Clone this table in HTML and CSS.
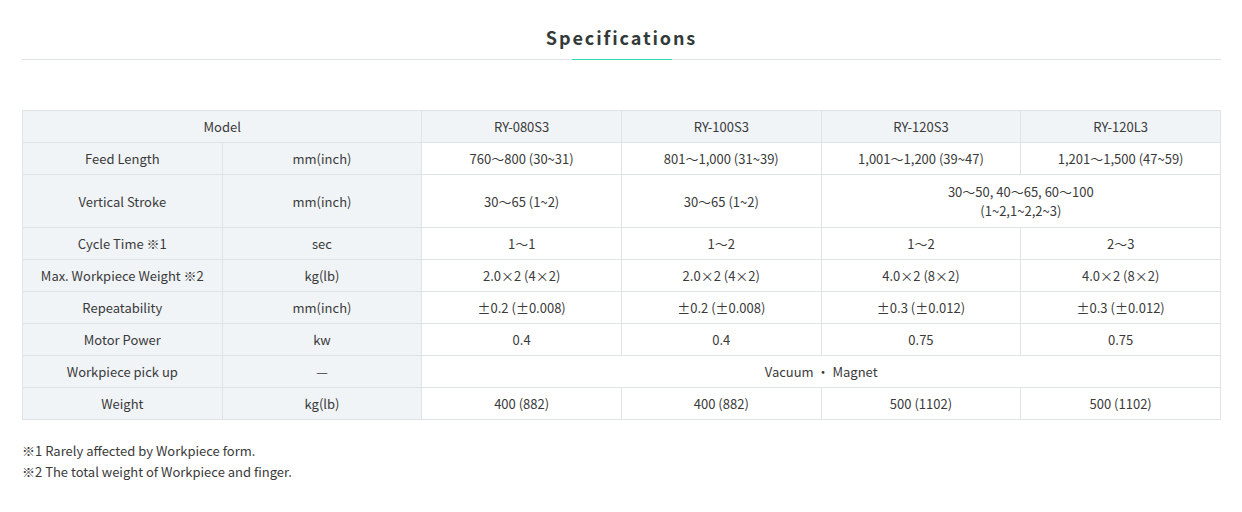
FILE: index.html
```html
<!DOCTYPE html>
<html lang="en">
<head>
<meta charset="utf-8">
<title>Specifications</title>
<link rel="stylesheet" href="styles.css">
</head>
<body>
<div class="page">
  <div class="heading">
    <h2 class="title">Specifications</h2>
  </div>
  <table class="spec">
    <colgroup>
      <col><col><col><col><col><col>
    </colgroup>
    <tr class="r32">
      <th colspan="2">Model</th>
      <th>RY-080S3</th><th>RY-100S3</th><th>RY-120S3</th><th>RY-120L3</th>
    </tr>
    <tr class="r32">
      <th>Feed Length</th><th>mm(inch)</th>
      <td>760～800 (30~31)</td><td>801～1,000 (31~39)</td><td>1,001～1,200 (39~47)</td><td>1,201～1,500 (47~59)</td>
    </tr>
    <tr class="r53">
      <th>Vertical Stroke</th><th>mm(inch)</th>
      <td>30～65 (1~2)</td><td>30～65 (1~2)</td><td colspan="2">30～50, 40～65, 60～100<br>(1~2,1~2,2~3)</td>
    </tr>
    <tr class="r32">
      <th>Cycle Time ※1</th><th>sec</th>
      <td>1～1</td><td>1～2</td><td>1～2</td><td>2～3</td>
    </tr>
    <tr class="r32">
      <th>Max. Workpiece Weight ※2</th><th>kg(lb)</th>
      <td>2.0×2 (4×2)</td><td>2.0×2 (4×2)</td><td>4.0×2 (8×2)</td><td>4.0×2 (8×2)</td>
    </tr>
    <tr class="r32">
      <th>Repeatability</th><th>mm(inch)</th>
      <td>±0.2 (±0.008)</td><td>±0.2 (±0.008)</td><td>±0.3 (±0.012)</td><td>±0.3 (±0.012)</td>
    </tr>
    <tr class="r32">
      <th>Motor Power</th><th>kw</th>
      <td>0.4</td><td>0.4</td><td>0.75</td><td>0.75</td>
    </tr>
    <tr class="r32">
      <th>Workpiece pick up</th><th>—</th>
      <td colspan="4">Vacuum ・ Magnet</td>
    </tr>
    <tr class="r32">
      <th>Weight</th><th>kg(lb)</th>
      <td>400 (882)</td><td>400 (882)</td><td>500 (1102)</td><td>500 (1102)</td>
    </tr>
  </table>
  <div class="notes">
    <p>※1 Rarely affected by Workpiece form.</p>
    <p>※2 The total weight of Workpiece and finger.</p>
  </div>
</div>
</body>
</html>
```

FILE: styles.css
```css
* { box-sizing: border-box; }
html, body { margin: 0; padding: 0; background: #fff; }
body {
  font-family: "Noto Sans CJK JP", "Noto Sans", sans-serif;
  color: #333;
}
.page {
  padding: 0 21px 0 22px;
}
.heading {
  position: relative;
  height: 60px;
  border-bottom: 1px solid #dde3e6;
  text-align: center;
  padding-top: 23px;
}
.heading::after {
  content: "";
  position: absolute;
  left: 50%;
  margin-left: -50px;
  bottom: -1px;
  width: 100px;
  height: 1px;
  background: #2fdcb8;
}
.title {
  margin: 0;
  font-size: 18px;
  line-height: 28px;
  font-weight: 700;
  letter-spacing: 1.9px;
  color: #333a3a;
}
.spec {
  margin-top: 50px;
  width: 1199px;
  border-collapse: collapse;
  table-layout: fixed;
  font-size: 13px;
  color: #3a3a3a;
}
.spec th, .spec td {
  border: 1px solid #dde3e6;
  text-align: center;
  vertical-align: middle;
  padding: 0 4px;
  font-weight: 400;
  line-height: 19px;
}
.spec th { background: #f0f4f7; }
.spec td { background: #fff; }
.r32 { height: 32px; }
.r53 { height: 53px; }
.notes {
  margin-top: 20px;
  font-size: 13px;
  line-height: 21px;
  color: #3a3a3a;
}
.notes p { margin: 0; }
```
